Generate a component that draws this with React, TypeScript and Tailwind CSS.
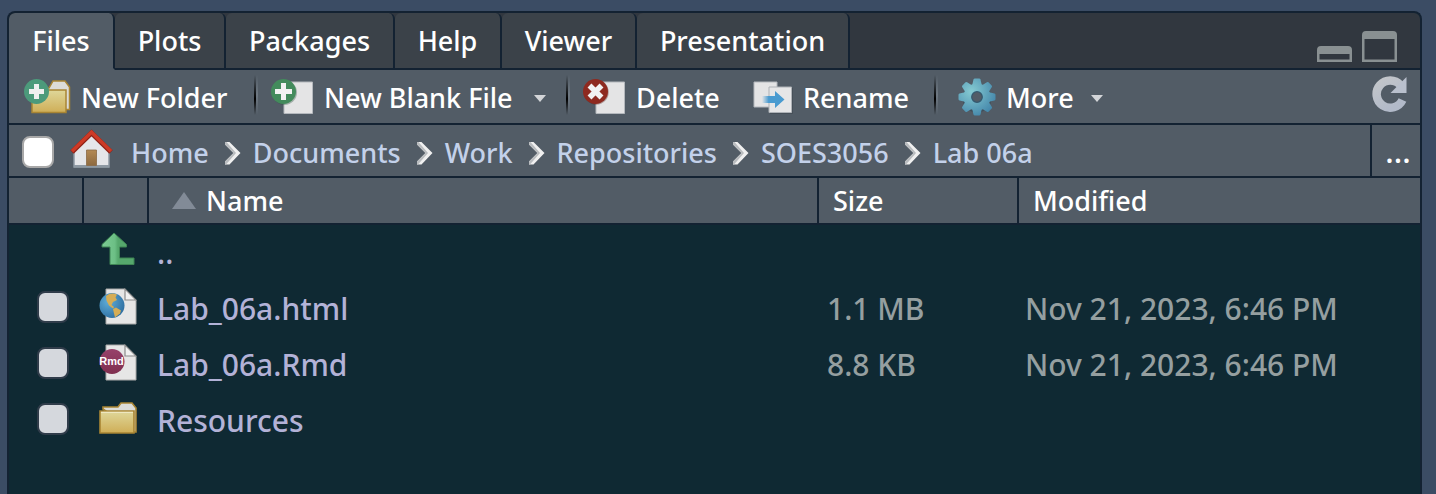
import type { ReactNode } from "react";

const tabs = [
  { label: "Files", width: "w-[106px]" },
  { label: "Plots", width: "w-[111px]" },
  { label: "Packages", width: "w-[169px]" },
  { label: "Help", width: "w-[107px]" },
  { label: "Viewer", width: "w-[135px]" },
  { label: "Presentation", width: "w-[213px]" },
];

const crumbs = ["Home", "Documents", "Work", "Repositories", "SOES3056", "Lab 06a"];

function FolderShape() {
  return (
    <>
      <path d="M4 8V6h15l3-4h11l4 5v24h-4L20 20z" fill="#dcdcd8" stroke="#a98533" strokeWidth="1.6" />
      <path d="M1 10h34v22H1z" fill="url(#folderFront)" stroke="#a98533" strokeWidth="1.6" />
      <path d="M2 11.3h32" stroke="#f2eccb" strokeWidth="1" />
    </>
  );
}

function Gradients() {
  return (
    <svg className="absolute size-0" aria-hidden="true">
      <defs>
        <linearGradient id="folderFront" x1="0" y1="0" x2="0" y2="1">
          <stop offset="0" stopColor="#dfd79a" />
          <stop offset="1" stopColor="#cfae57" />
        </linearGradient>
        <radialGradient id="gearFill" cx="0.35" cy="0.35" r="0.7">
          <stop offset="0" stopColor="#86cbd2" />
          <stop offset="1" stopColor="#4487ab" />
        </radialGradient>
        <linearGradient id="arrowGreen" x1="0" y1="0" x2="1" y2="0">
          <stop offset="0" stopColor="#7ccb94" />
          <stop offset="0.4" stopColor="#6cbf85" />
          <stop offset="0.5" stopColor="#56a86d" />
          <stop offset="1" stopColor="#56a86d" />
        </linearGradient>
        <linearGradient id="arrowBlue" x1="0" y1="0" x2="1" y2="0">
          <stop offset="0" stopColor="#4a9bd0" stopOpacity="0" />
          <stop offset="0.3" stopColor="#4a9bd0" />
          <stop offset="1" stopColor="#4a9bd0" />
        </linearGradient>
        <radialGradient id="globeFill" cx="0.35" cy="0.35" r="0.7">
          <stop offset="0" stopColor="#5fadd8" />
          <stop offset="1" stopColor="#2f70a3" />
        </radialGradient>
        <linearGradient id="doorFill" x1="0" y1="0" x2="0" y2="1">
          <stop offset="0" stopColor="#b48a55" />
          <stop offset="1" stopColor="#8d6a40" />
        </linearGradient>
        <linearGradient id="refreshFill" x1="0" y1="0" x2="0.6" y2="1">
          <stop offset="0" stopColor="#c3c6ca" />
          <stop offset="1" stopColor="#b2bac9" />
        </linearGradient>
        <linearGradient id="rmdFill" x1="0" y1="0" x2="0" y2="1">
          <stop offset="0" stopColor="#97426b" />
          <stop offset="1" stopColor="#7f2f4f" />
        </linearGradient>
      </defs>
    </svg>
  );
}

function NewFolderIcon() {
  return (
    <svg width="47" height="36" viewBox="0 0 47 36" aria-hidden="true">
      <path d="M12 12V9h13l4-7h12l4.500 6v22.500H41V12z" fill="#dcdcd8" stroke="#a98533" strokeWidth="1.5" />
      <path d="M8 11h34v22.500H8z" fill="url(#folderFront)" stroke="#a98533" strokeWidth="1.5" />
      <circle cx="12.500" cy="12.500" r="12.500" fill="#4c9a7b" />
      <path d="M10 5h5v5h5v5h-5v5h-5v-5H5v-5h5z" fill="#efefef" />
    </svg>
  );
}

function NewFileIcon() {
  return (
    <svg width="43" height="36" viewBox="0 0 43 36" aria-hidden="true">
      <path d="M13 3h28.500v31.500H13z" fill="#e4e4e5" stroke="#b4b8bd" />
      <circle cx="13.500" cy="13.500" r="12.500" fill="#2e5140" opacity="0.350" />
      <circle cx="12.500" cy="12.500" r="12.500" fill="#438b5c" />
      <path d="M10 4h5v6h6v5h-6v6h-5v-6H4v-5h6z" fill="#f2f2f2" />
    </svg>
  );
}

function DeleteIcon() {
  return (
    <svg width="43" height="36" viewBox="0 0 43 36" aria-hidden="true">
      <path d="M13 3h28.500v31.500H13z" fill="#e4e4e5" stroke="#b4b8bd" />
      <circle cx="13.200" cy="13.200" r="12.500" fill="#4a1712" opacity="0.350" />
      <circle cx="12.500" cy="12.500" r="12.500" fill="#8e2a20" />
      <path d="M6.500 6.500l12 12m0-12l-12 12" stroke="#f2f2f2" strokeWidth="5.500" />
    </svg>
  );
}

function RenameIcon() {
  return (
    <svg width="40" height="36" viewBox="0 0 40 36" aria-hidden="true">
      <path d="M1 3h23v25H1z" fill="#e4e4e5" stroke="#b4b8bd" />
      <path d="M17 9h23v26H17z" fill="#3c444c" opacity="0.500" />
      <path d="M16 8h22.500v25.500H16z" fill="#e6e6e7" stroke="#aeb2b7" />
      <path d="M9 17h13v-5l9.500 8.500-9.500 8.500v-5H9z" fill="url(#arrowBlue)" />
    </svg>
  );
}

function GearIcon() {
  const teeth = [0, 45, 90, 135, 180, 225, 270, 315];
  return (
    <svg width="38" height="38" viewBox="0 0 38 38" aria-hidden="true">
      <g fill="#2d4250" opacity="0.500" transform="translate(0 1)">
        <circle cx="19" cy="19" r="14.500" />
      </g>
      <mask id="gearMask">
        <circle cx="19" cy="19" r="13.500" fill="#fff" />
        {teeth.map((angle) => (
          <path
            key={angle}
            d="M14 8l1.500-6.500q.3-1 1.300-1h4.400q1 0 1.300 1L24 8z"
            fill="#fff"
            transform={`rotate(${angle} 19 19)`}
          />
        ))}
        <circle cx="19" cy="19" r="5" fill="#000" />
      </mask>
      <path d="M0 0h38v38H0z" fill="url(#gearFill)" mask="url(#gearMask)" />
      <circle cx="19" cy="19" r="5.300" fill="#525c66" stroke="#34596f" strokeWidth="1.200" />
    </svg>
  );
}

function RefreshIcon() {
  return (
    <svg width="36" height="38" viewBox="0 0 36 38" aria-hidden="true">
      <path d="M28.500 9.200A13.600 13.600 0 1 0 30.500 24" fill="none" stroke="url(#refreshFill)" strokeWidth="8.500" />
      <path d="M34.500 1v16H18.500l6-6L29 6.500z" fill="#b9c0cd" />
    </svg>
  );
}

function HouseIcon() {
  return (
    <svg width="43" height="40" viewBox="0 0 43 40" aria-hidden="true">
      <path d="M4 20L21.500 4 39 20v18H4z" fill="#e5e6e9" stroke="#8e99a3" strokeWidth="1.500" />
      <path d="M4 36h35v2.500H4z" fill="#8e99a3" />
      <path d="M16.500 21h10v15.500h-10z" fill="url(#doorFill)" stroke="#8a6a45" strokeWidth="0.800" />
      <path d="M2 23L21.500 4 41 23" fill="none" stroke="#8f2318" strokeWidth="5" />
      <path d="M2 22.300L21.500 3.300l19.500 19" fill="none" stroke="#cd3a26" strokeWidth="3.500" />
    </svg>
  );
}

function ChevronIcon() {
  return (
    <svg width="16" height="24" viewBox="0 0 16 24" aria-hidden="true">
      <path d="M0 1h4.500L15.500 12 4.500 23.500H0v-3L8.500 12 0 3.500z" fill="#f0f0f0" />
      <path d="M0 1v2.500L8.500 12 0 20.500v3h1L11 12 1.500 1z" fill="#b9bcbf" />
    </svg>
  );
}

function UpIcon() {
  return (
    <svg width="34" height="34" viewBox="0 0 34 34" aria-hidden="true">
      <path
        d="M13 1L25.500 12.500V15H18.500v11H33v6.500H9V15H1v-2.500z"
        fill="url(#arrowGreen)"
        stroke="#3f8554"
        strokeWidth="1"
      />
    </svg>
  );
}

function PageShape() {
  return (
    <>
      <path d="M7 1h19l11 11v24H7z" fill="#e6e6e6" stroke="#a9a9a9" strokeWidth="1" />
      <path d="M26 1v11h11z" fill="#f1f1f1" stroke="#8c8c8c" strokeWidth="1.200" />
    </>
  );
}

function HtmlIcon() {
  return (
    <svg width="38" height="37" viewBox="0 0 38 37" aria-hidden="true">
      <PageShape />
      <circle cx="13" cy="17.500" r="12.500" fill="url(#globeFill)" />
      <path d="M7 8q5-4 11-1.500l-1.500 3L18 12l-4 2-1.500 3 2.500 2-1 1.500-4-3-2.500-5z" fill="#d6ad55" />
      <path d="M14 21l3-1.500 5 3-1 3-5 4-1-4z" fill="#d6ad55" />
    </svg>
  );
}

function RmdIcon() {
  return (
    <svg width="38" height="37" viewBox="0 0 38 37" aria-hidden="true">
      <PageShape />
      <circle cx="13" cy="17.500" r="12.500" fill="url(#rmdFill)" />
      <text
        x="12.500"
        y="20.500"
        textAnchor="middle"
        fontFamily="'Liberation Sans', sans-serif"
        fontWeight="700"
        fontSize="11"
        fill="#ffffff"
      >
        Rmd
      </text>
    </svg>
  );
}

function FolderIcon() {
  return (
    <svg width="39" height="34" viewBox="0 0 39 34" aria-hidden="true">
      <FolderShape />
    </svg>
  );
}

function Caret() {
  return (
    <svg width="12" height="7" viewBox="0 0 12 7" aria-hidden="true">
      <path d="M0 0h12L6 7z" fill="#d3d5d8" />
    </svg>
  );
}

function Separator() {
  return (
    <span className="mb-1 flex h-10 w-1 shrink-0">
      <span className="w-0.5 bg-linear-to-b from-transparent via-black to-transparent via-60%" />
      <span className="w-0.5 bg-linear-to-b from-transparent via-[#6e7882] to-transparent" />
    </span>
  );
}

function ToolButton({
  icon,
  label,
  width,
  menu = false,
}: {
  icon: ReactNode;
  label: string;
  width: string;
  menu?: boolean;
}) {
  return (
    <button type="button" className={`flex h-full shrink-0 items-center whitespace-nowrap ${width}`}>
      {icon}
      <span className="mt-0.5 ml-2.5">{label}</span>
      {menu && (
        <span className="mt-1 ml-auto">
          <Caret />
        </span>
      )}
    </button>
  );
}

const files = [
  { name: "Lab_06a.html", icon: <HtmlIcon />, size: "1.1 MB", modified: "Nov 21, 2023, 6:46 PM" },
  { name: "Lab_06a.Rmd", icon: <RmdIcon />, size: "8.8 KB", modified: "Nov 21, 2023, 6:46 PM" },
  { name: "Resources", icon: <FolderIcon />, size: "", modified: "" },
];

export default function App() {
  return (
    <div className="flex min-h-screen flex-col bg-[#3b4c64] pt-[11px] pr-3.5 pl-[7px] font-['Noto_Sans',sans-serif] text-[27px] leading-9 font-medium text-white">
      <Gradients />
      <main className="flex flex-1 flex-col overflow-hidden rounded-t-lg border-2 border-b-0 border-[#132232] bg-[#0f2933]">
        <header className="flex h-[57px] shrink-0 items-stretch bg-[#31373f]">
          <div role="tablist" className="flex">
            {tabs.map((tab, i) => (
              <button
                key={tab.label}
                type="button"
                role="tab"
                aria-selected={i === 0}
                className={`${tab.width} rounded-t-md border-r-2 border-b-2 border-r-[#132232] ${
                  i === 0 ? "border-b-[#525c66] bg-[#525c66]" : "border-b-[#132232] bg-[#3b4249]"
                }`}
              >
                {tab.label}
              </button>
            ))}
          </div>
          <div className="flex flex-1 items-end justify-end gap-2.5 border-b-2 border-[#132232] pr-[23px] pb-1.5">
            <button type="button" aria-label="Minimize">
              <svg className="block" width="35" height="16" viewBox="0 0 35 16" aria-hidden="true">
                <path d="M0 16V4q0-4 4-4h27q4 0 4 4v12zM2.500 8v5.500h30V8z" fill="#899092" fillRule="evenodd" />
              </svg>
            </button>
            <button type="button" aria-label="Maximize">
              <svg className="block" width="35" height="31" viewBox="0 0 35 31" aria-hidden="true">
                <path d="M0 31V4q0-4 4-4h27q4 0 4 4v27zM2.500 8v20.500h30V8z" fill="#899092" fillRule="evenodd" />
              </svg>
            </button>
          </div>
        </header>

        <div className="flex h-[55px] shrink-0 items-center border-b-2 border-[#132232] bg-[#525c66] pr-3 pl-[15px]">
          <ToolButton icon={<NewFolderIcon />} label="New Folder" width="w-[230px]" />
          <Separator />
          <span className="w-[13px]" />
          <ToolButton icon={<NewFileIcon />} label="New Blank File" width="w-[275px]" menu />
          <span className="w-5" />
          <Separator />
          <span className="w-[13px]" />
          <ToolButton icon={<DeleteIcon />} label="Delete" width="w-[170px]" />
          <ToolButton icon={<RenameIcon />} label="Rename" width="w-[181px]" />
          <Separator />
          <span className="w-5" />
          <ToolButton icon={<GearIcon />} label="More" width="w-[145px]" menu />
          <button type="button" aria-label="Refresh" className="mb-1 ml-auto">
            <RefreshIcon />
          </button>
        </div>

        <div className="flex h-[53px] shrink-0 items-stretch border-b-2 border-[#132232] bg-[#525c66]">
          <div className="flex flex-1 items-center pl-[13px]">
            <input
              type="checkbox"
              aria-label="Select all"
              className="mt-0.5 size-8 appearance-none rounded-lg border-2 border-[#a8a8a8] bg-white"
            />
            <nav aria-label="Path" className="ml-4 flex items-center text-[#c3d1ea]">
              <a href="#home" aria-label="Go home" className="mr-[18px] mb-1">
                <HouseIcon />
              </a>
              {crumbs.map((crumb, i) => (
                <span key={crumb} className="flex items-center">
                  {i > 0 && (
                    <span className="mt-1 mr-3 ml-4">
                      <ChevronIcon />
                    </span>
                  )}
                  <a href="#path" className="pt-1">
                    {crumb}
                  </a>
                </span>
              ))}
            </nav>
          </div>
          <button
            type="button"
            aria-label="Go to directory"
            className="w-[50px] border-l-2 border-[#132232] pl-1 text-[31px]"
          >
            ...
          </button>
        </div>

        <table className="w-full table-fixed border-separate border-spacing-0 text-left">
          <colgroup>
            <col className="w-[75px]" />
            <col className="w-[65px]" />
            <col />
            <col className="w-[200px]" />
            <col className="w-[401px]" />
          </colgroup>
          <thead>
            <tr className="h-[47px] bg-[#525c66]">
              <td className="border-r-2 border-b-2 border-[#132232]" />
              <td className="border-r-2 border-b-2 border-[#132232]" />
              <th className="border-r-2 border-b-2 border-[#132232] p-0 font-medium">
                <span className="flex items-center gap-2.5 pl-[23px]">
                  <svg width="24" height="17" viewBox="0 0 24 17" aria-hidden="true">
                    <path d="M12 0l12 17H0z" fill="#828b97" />
                  </svg>
                  Name
                </span>
              </th>
              <th className="border-r-2 border-b-2 border-[#132232] p-0 pl-3.5 font-medium">Size</th>
              <th className="border-b-2 border-[#132232] p-0 pl-3.5 font-medium">Modified</th>
            </tr>
          </thead>
          <tbody className="text-[30px] font-medium text-[#b3b2d7]">
            <tr className="h-14">
              <td />
              <td className="p-0 pb-2 pl-[17px]">
                <UpIcon />
              </td>
              <td className="p-0 pl-2">
                <a href="#up">..</a>
              </td>
              <td />
              <td />
            </tr>
            {files.map((file) => (
              <tr key={file.name} className="h-14">
                <td className="p-0 pb-1 pl-7">
                  <input
                    type="checkbox"
                    aria-label={`Select ${file.name}`}
                    className="block size-8 appearance-none rounded-lg border-2 border-[#303c4a] bg-[#d5d8dd]"
                  />
                </td>
                <td className="p-0 pb-1.5 pl-[15px]">{file.icon}</td>
                <td className="p-0 pl-2">
                  <a href="#file">{file.name}</a>
                </td>
                <td className="p-0 pl-2 text-[#959fa0]">{file.size}</td>
                <td className="p-0 pl-1.5 whitespace-nowrap text-[#959fa0]">{file.modified}</td>
              </tr>
            ))}
          </tbody>
        </table>
      </main>
    </div>
  );
}
